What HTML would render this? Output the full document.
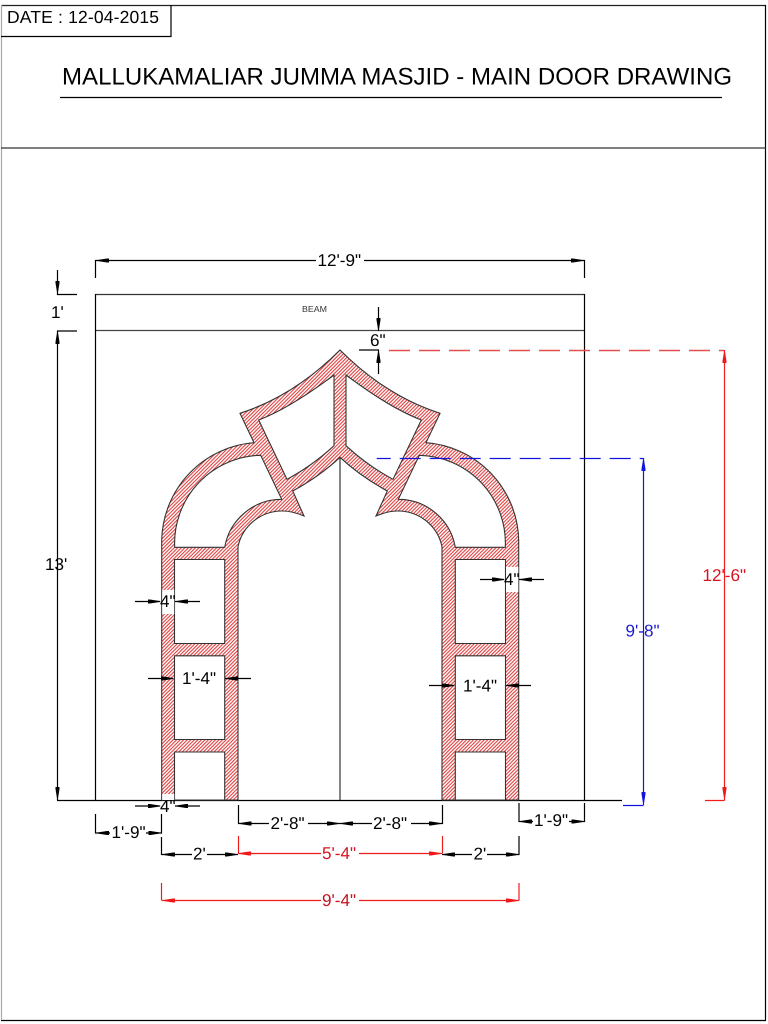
<!DOCTYPE html>
<html>
<head>
<meta charset="utf-8">
<style>
html,body{margin:0;padding:0;background:#fff;width:768px;height:1024px;overflow:hidden}
svg{display:block}
text{font-family:"Liberation Sans",Arial,sans-serif;font-size:17.1px;fill:#000;text-rendering:geometricPrecision}
.k line,.k path{stroke:#000;stroke-width:1.2;fill:none}
.r line{stroke:#f01c1c;stroke-width:1.2;fill:none}
.b line{stroke:#1414e0;stroke-width:1.2;fill:none}
</style>
</head>
<body>
<svg width="768" height="1024" viewBox="0 0 768 1024" xmlns="http://www.w3.org/2000/svg">
<defs>
<pattern id="h" patternUnits="userSpaceOnUse" width="2.5" height="2.5" patternTransform="rotate(45)">
<rect width="2.5" height="2.5" fill="#fff"/>
<rect width="1.1" height="2.5" fill="#e23f3f"/>
</pattern>
<path id="a" d="M0 0L3 -.7L11 -2H13V2H11L3 .7Z"/>
</defs>
<rect width="768" height="1024" fill="#fff"/>

<!-- frame -->
<g class="k">
<line x1="1" y1="5.5" x2="766" y2="5.5" style="stroke:#222"/>
<line x1="765.5" y1="5" x2="765.5" y2="1020"/>
<line x1="1" y1="1020.5" x2="766" y2="1020.5"/>
<line x1="1.5" y1="5" x2="1.5" y2="1020" style="stroke:#aaa"/>
<line x1="1" y1="36.5" x2="171.5" y2="36.5"/>
<line x1="171" y1="5" x2="171" y2="37"/>
<line x1="60" y1="97.5" x2="722" y2="97.5"/>
<line x1="1" y1="148" x2="766" y2="148" style="stroke:#333"/>
</g>
<text x="7" y="23" style="font-size:17.5px" textLength="152">DATE : 12-04-2015</text>
<text x="62" y="84.5" style="font-size:24px" textLength="670">MALLUKAMALIAR JUMMA MASJID - MAIN DOOR DRAWING</text>

<!-- wall -->
<g class="k">
<line x1="95.5" y1="294.5" x2="584.5" y2="294.5" style="stroke:#333"/>
<line x1="95.5" y1="330.5" x2="584.5" y2="330.5" style="stroke:#444"/>
<line x1="95.5" y1="294" x2="95.5" y2="800"/>
<line x1="584.5" y1="294" x2="584.5" y2="800"/>
<line x1="57" y1="800.5" x2="622" y2="800.5"/>
<line x1="340" y1="457" x2="340" y2="800" style="stroke:#333"/>
</g>
<text x="302" y="312" style="font-size:8.8px;fill:#333">BEAM</text>

<!-- arch -->
<path fill="url(#h)" fill-rule="evenodd" stroke="#333" stroke-width="1.1" d="M340 350Q294 396 240 413.3L254 442.7A100 100 0 0 0 161.7 540V800H238V546.7A45 45 0 0 1 283 511Q292 511 304 516L292.7 491Q320 476 340 457.3Q360 476 387.3 491L376 516Q388 511 397 511A45 45 0 0 1 442 546.7V800H518.7V540A100 100 0 0 0 426 442.7L440 413.3Q386 396 340 350Z
M334 375Q290 408 258.7 420L287 479.3Q312 466 334 445.7Z
M346 375Q390 408 421.3 420L393 479.3Q368 466 346 445.7Z
M260.7 455.3A88 88 0 0 0 174.7 547.3H224.7A58 58 0 0 1 281.7 499.3Z
M419.3 455.3A88 88 0 0 1 505.3 547.3H455.3A58 58 0 0 0 398.3 499.3Z
M174.5 559.5H224.7V643.5H174.5Z
M174.5 655.8H224.7V739.5H174.5Z
M174.5 752H224.7V800H174.5Z
M455.3 559.5H505.5V643.5H455.3Z
M455.3 655.8H505.5V739.5H455.3Z
M455.3 752H505.5V800H455.3Z"/>
<rect x="162.2" y="590" width="12" height="24" fill="#fff"/>
<rect x="162.2" y="794" width="12" height="6" fill="#fff"/>
<rect x="506" y="567" width="12.3" height="25" fill="#fff"/>

<!-- black dimensions -->
<g class="k">
<path d="M95.5 278V260.5H316M364 260.5H584.5V278"/>
<path d="M57.5 270V294.5H77"/>
<path d="M77 331H57.5V800"/>
<path d="M378.5 307V331"/>
<path d="M359 350H378.5V374"/>
<line x1="135" y1="601.5" x2="160" y2="601.5"/><line x1="175" y1="601.5" x2="200" y2="601.5"/>
<line x1="148" y1="678.5" x2="173" y2="678.5"/><line x1="225" y1="678.5" x2="251" y2="678.5"/>
<line x1="429" y1="685.5" x2="454" y2="685.5"/><line x1="506" y1="685.5" x2="531" y2="685.5"/>
<line x1="480" y1="579.5" x2="504" y2="579.5"/><line x1="519" y1="579.5" x2="544" y2="579.5"/>
<line x1="135" y1="806" x2="160" y2="806"/><line x1="175" y1="806" x2="200" y2="806"/>
<path d="M95.5 814V833H110M146 833H161.5V814"/>
<path d="M238.5 805V823.5H269M308 823.5H372M411 823.5H442.5V805"/>
<path d="M519 803V821.5H533M569 821.5H584.5V803"/>
<path d="M161.5 837V854.5H192M207 854.5H238"/>
<path d="M442 854.5H472M487 854.5H519V836"/>
</g>
<g fill="#000">
<use href="#a" transform="translate(96,260.5)"/>
<use href="#a" transform="translate(584,260.5) rotate(180)"/>
<use href="#a" transform="translate(57.5,294) rotate(-90)"/>
<use href="#a" transform="translate(57.5,331) rotate(90)"/>
<use href="#a" transform="translate(57.5,800) rotate(-90)"/>
<use href="#a" transform="translate(378.5,331) rotate(-90)"/>
<use href="#a" transform="translate(378.5,350) rotate(90)"/>
<use href="#a" transform="translate(161,601.5) rotate(180)"/>
<use href="#a" transform="translate(175,601.5)"/>
<use href="#a" transform="translate(174,678.5) rotate(180)"/>
<use href="#a" transform="translate(225,678.5)"/>
<use href="#a" transform="translate(455,685.5) rotate(180)"/>
<use href="#a" transform="translate(506,685.5)"/>
<use href="#a" transform="translate(505,579.5) rotate(180)"/>
<use href="#a" transform="translate(519,579.5)"/>
<use href="#a" transform="translate(161,806) rotate(180)"/>
<use href="#a" transform="translate(175,806)"/>
<use href="#a" transform="translate(96,833)"/>
<use href="#a" transform="translate(161.5,833) rotate(180)"/>
<use href="#a" transform="translate(238.5,823.5)"/>
<use href="#a" transform="translate(340,823.5) rotate(180)"/>
<use href="#a" transform="translate(340,823.5)"/>
<use href="#a" transform="translate(442,823.5) rotate(180)"/>
<use href="#a" transform="translate(519,821.5)"/>
<use href="#a" transform="translate(584.5,821.5) rotate(180)"/>
<use href="#a" transform="translate(162,854.5)"/>
<use href="#a" transform="translate(238,854.5) rotate(180)"/>
<use href="#a" transform="translate(442,854.5)"/>
<use href="#a" transform="translate(519,854.5) rotate(180)"/>
</g>
<text x="317.5" y="266">12'-9"</text>
<text x="51" y="318">1'</text>
<text x="45" y="570">13'</text>
<text x="370" y="346">6"</text>
<text x="160" y="607">4"</text>
<text x="182" y="684">1'-4"</text>
<text x="463" y="691.5">1'-4"</text>
<text x="504" y="585">4"</text>
<text x="160" y="812">4"</text>
<text x="111.5" y="838">1'-9"</text>
<text x="270.5" y="829">2'-8"</text>
<text x="373" y="829">2'-8"</text>
<text x="534" y="826">1'-9"</text>
<text x="193" y="859.5">2'</text>
<text x="473.5" y="859.5">2'</text>

<!-- red -->
<g class="r">
<line x1="389" y1="350.5" x2="724" y2="350.5" stroke-dasharray="21 9" style="stroke:#e45050;stroke-width:1.5"/>
<line x1="724.5" y1="350" x2="724.5" y2="800.5"/>
<line x1="705" y1="800.5" x2="724.5" y2="800.5"/>
<line x1="238.5" y1="836" x2="238.5" y2="853.5"/>
<line x1="442.5" y1="836" x2="442.5" y2="853.5"/>
<line x1="238" y1="853.5" x2="321" y2="853.5"/><line x1="359" y1="853.5" x2="442" y2="853.5"/>
<line x1="161.5" y1="883" x2="161.5" y2="900.5"/>
<line x1="519" y1="883" x2="519" y2="900.5"/>
<line x1="162" y1="900.5" x2="321" y2="900.5"/><line x1="359" y1="900.5" x2="519" y2="900.5"/>
</g>
<g fill="#f01818">
<use href="#a" transform="translate(724.5,350) rotate(90)"/>
<use href="#a" transform="translate(724.5,800) rotate(-90)"/>
<use href="#a" transform="translate(238,853.5)"/>
<use href="#a" transform="translate(442,853.5) rotate(180)"/>
<use href="#a" transform="translate(162,900.5)"/>
<use href="#a" transform="translate(519,900.5) rotate(180)"/>
</g>
<text x="702.5" y="581" style="fill:#d8121e">12'-6"</text>
<text x="322" y="859" style="fill:#d8121e">5'-4"</text>
<text x="322" y="906" style="fill:#c0141e">9'-4"</text>

<!-- blue -->
<g class="b">
<line x1="376.7" y1="458.5" x2="643" y2="458.5" stroke-dasharray="21 9" stroke-dashoffset="7"/>
<line x1="643.5" y1="458" x2="643.5" y2="805"/>
<line x1="623" y1="805.5" x2="643.5" y2="805.5"/>
</g>
<g fill="#1414e0">
<use href="#a" transform="translate(643.5,458) rotate(90)"/>
<use href="#a" transform="translate(643.5,805) rotate(-90)"/>
</g>
<text x="625.5" y="636.5" style="fill:#1a1ad0">9'-8"</text>
</svg>
</body>
</html>
